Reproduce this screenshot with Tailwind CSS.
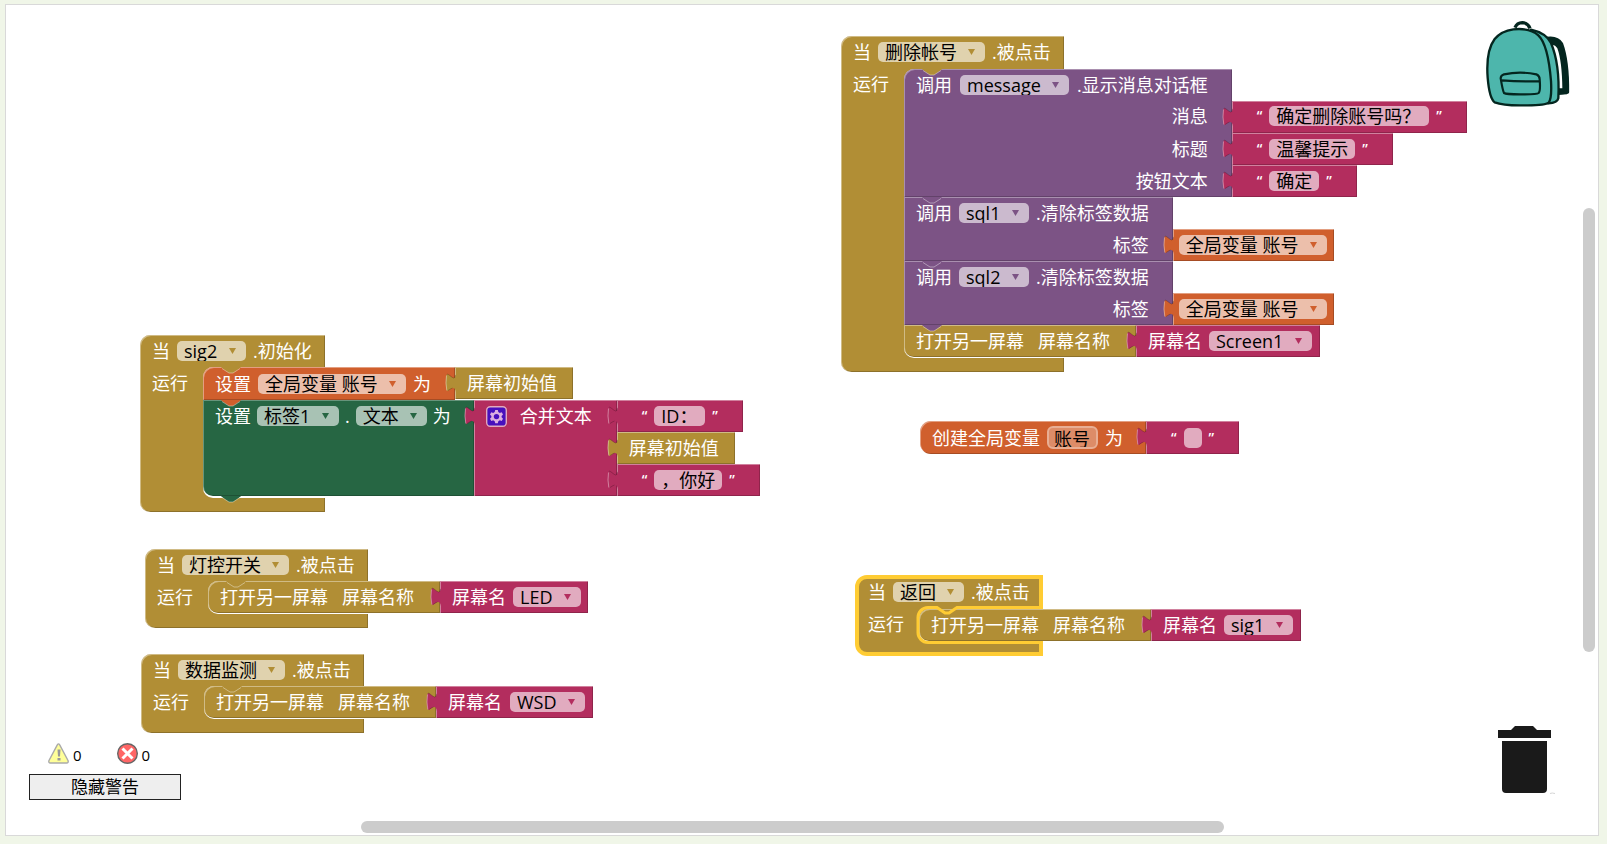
<!DOCTYPE html>
<html lang="zh-CN">
<head>
<meta charset="utf-8">
<title>Blocks</title>
<script src="https://cdn.jsdelivr.net/npm/@tailwindcss/browser@4"></script>
</head>
<body class="h-screen overflow-hidden bg-[#f0f6e8] pt-1 pr-2 pb-2 pl-[5px] font-['Open_Sans','Noto_Sans_CJK_SC',sans-serif] text-lg leading-5 text-white">

<svg class="hidden" aria-hidden="true">
  <symbol id="tab" viewBox="0 0 11 20">
    <path d="M11 1C10.500 5 9 5.500 7.500 4.500 5 3 3 .5 1.800 1.500 .5 3 .5 15 1.800 17.500 3 19 5 16 7.500 15 9 14.500 10.500 15.500 11 19Z" fill="currentColor"/>
    <path d="M10.500 2C10 5 9 5.500 7.500 4.500 5 3 3 .5 1.800 1.500" fill="none" stroke="#000" stroke-opacity=".2"/>
    <path d="M1.500 2.500Q.3 10 1.800 17.500" fill="none" stroke="#fff" stroke-opacity=".4"/>
    <path d="M3 17.500Q5 16 7.500 15" fill="none" stroke="#000" stroke-opacity=".2"/>
  </symbol>
  <symbol id="notch" viewBox="0 0 20 7">
    <path d="M0 0H20L19 1 12 6H8L1 1Z" fill="currentColor"/>
    <path d="M1 1.500L8 6H12L19 1.500" fill="none" stroke="#fff" stroke-opacity=".4"/>
  </symbol>
  <symbol id="arrow" viewBox="0 0 8 8"><path d="M0 1H8L4 8Z" fill="currentColor"/></symbol>
  <symbol id="gear" viewBox="0 0 21 21">
    <rect x=".7" y=".7" width="19.600" height="19.600" rx="3.500" fill="#4710bd" stroke="#e0a9bf" stroke-width="1.400"/>
    <path d="M9.200 4H11.800L12.300 6 13.800 6.900 15.700 6.300 17 8.500 15.600 9.900V11.300L17 12.700 15.700 14.900 13.800 14.300 12.300 15.200 11.800 17.200H9.200L8.700 15.200 7.200 14.300 5.300 14.900 4 12.700 5.400 11.300V9.900L4 8.500 5.300 6.300 7.200 6.900 8.700 6Z" fill="#dcb0e0"/>
    <circle cx="10.500" cy="10.600" r="2.700" fill="#4710bd"/>
  </symbol>
</svg>

<main class="relative h-full overflow-hidden border border-[#d9d9d9] bg-white">

  <!-- sig2 initialise -->
  <section class="absolute top-[330px] left-[134px] w-max">
    <div class="relative flex h-8 w-[185px] items-center gap-[7px] rounded-tl-[10px] bg-[#b18e35] pl-3 shadow-[inset_1px_1px_0_rgba(255,255,255,0.4),inset_-1px_0_0_rgba(0,0,0,0.2)]">
      <span>当</span>
      <label class="relative flex text-[#b18e35]"><select aria-label="组件" class="h-5 appearance-none rounded-[5px] bg-[#e0d2ae] pr-7 pl-[7px] leading-5 text-black"><option>sig2</option></select><svg class="pointer-events-none absolute top-1.5 right-2.5 size-[7px]"><use href="#arrow"/></svg></label>
      <span>.初始化</span>
      <svg class="absolute top-full left-[81px] z-10 h-[7px] w-5 text-[#b18e35]"><use href="#notch"/></svg>
    </div>
    <div class="flex">
      <div class="w-[74px] bg-[#b18e35] pt-1.5 pl-3 shadow-[inset_1px_0_0_rgba(255,255,255,0.4)]">运行</div>
      <div class="-ml-[11px] rounded-l-[10px] bg-white pb-0.5">
        <div class="flex">
          <div class="relative flex h-[33px] items-center gap-[7px] rounded-tl-[10px] bg-[#d05f2d] pr-6 pl-3 shadow-[inset_1px_1px_0_rgba(255,255,255,0.4),inset_-1px_-1px_0_rgba(0,0,0,0.2)]">
            <span>设置</span>
            <label class="relative flex text-[#d05f2d]"><select aria-label="变量" class="h-5 appearance-none rounded-[5px] bg-[#ecbfab] pr-7 pl-[7px] leading-5 text-black"><option>全局变量 账号</option></select><svg class="pointer-events-none absolute top-1.5 right-2.5 size-[7px]"><use href="#arrow"/></svg></label>
            <span>为</span>
            <svg class="absolute top-full left-[18px] z-10 h-[7px] w-5 text-[#d05f2d]"><use href="#notch"/></svg>
          </div>
          <div class="relative flex h-8 items-center bg-[#b18e35] pr-4 pl-3 shadow-[inset_1px_1px_0_rgba(255,255,255,0.4),inset_-1px_-1px_0_rgba(0,0,0,0.2)]">
            <svg class="absolute top-1.5 -left-2.5 h-5 w-[11px] text-[#b18e35]"><use href="#tab"/></svg>
            <span>屏幕初始值</span>
          </div>
        </div>
        <div class="flex">
          <div class="relative flex gap-1.5 rounded-bl-[10px] bg-[#266643] pt-1.5 pr-[23px] pl-3 shadow-[inset_1px_1px_0_rgba(255,255,255,0.3),inset_-1px_-1px_0_rgba(0,0,0,0.2)]">
            <span>设置</span>
            <label class="relative flex h-5 text-[#266643]"><select aria-label="组件" class="h-5 appearance-none rounded-[5px] bg-[#a8c2b4] pr-7 pl-[7px] leading-5 text-black"><option>标签1</option></select><svg class="pointer-events-none absolute top-1.5 right-2.5 size-[7px]"><use href="#arrow"/></svg></label>
            <span>.</span>
            <label class="relative flex h-5 text-[#266643]"><select aria-label="属性" class="h-5 appearance-none rounded-[5px] bg-[#a8c2b4] pr-7 pl-[7px] leading-5 text-black"><option>文本</option></select><svg class="pointer-events-none absolute top-1.5 right-2.5 size-[7px]"><use href="#arrow"/></svg></label>
            <span>为</span>
            <svg class="absolute top-full left-[18px] z-10 h-[7px] w-5 text-[#266643]"><use href="#notch"/></svg>
          </div>
          <div class="relative flex gap-[13px] bg-[#b32d5e] pt-1.5 pr-[25px] pl-3 shadow-[inset_1px_1px_0_rgba(255,255,255,0.4),inset_-1px_-1px_0_rgba(0,0,0,0.2)]">
            <svg class="absolute top-1.5 -left-2.5 h-5 w-[11px] text-[#b32d5e]"><use href="#tab"/></svg>
            <button type="button" aria-label="设置项目" class="flex size-[21px]"><svg class="size-[21px]"><use href="#gear"/></svg></button>
            <span>合并文本</span>
          </div>
          <div class="flex flex-col items-start">
            <div class="relative flex h-8 items-center gap-[7px] bg-[#b32d5e] px-[25px] shadow-[inset_1px_1px_0_rgba(255,255,255,0.4),inset_-1px_-1px_0_rgba(0,0,0,0.2)]">
              <svg class="absolute top-1.5 -left-2.5 h-5 w-[11px] text-[#b32d5e]"><use href="#tab"/></svg>
              <span class="h-5 text-sm font-semibold">“</span><input aria-label="文本" value="ID：" class="h-5 w-[51px] rounded-[5px] bg-[#e1abbf] px-[7px] leading-5 text-black"><span class="h-5 text-sm font-semibold">”</span>
            </div>
            <div class="relative flex h-8 items-center bg-[#b18e35] pr-4 pl-3 shadow-[inset_1px_1px_0_rgba(255,255,255,0.4),inset_-1px_-1px_0_rgba(0,0,0,0.2)]">
              <svg class="absolute top-1.5 -left-2.5 h-5 w-[11px] text-[#b18e35]"><use href="#tab"/></svg>
              <span>屏幕初始值</span>
            </div>
            <div class="relative flex h-8 items-center gap-[7px] bg-[#b32d5e] px-[25px] shadow-[inset_1px_1px_0_rgba(255,255,255,0.4),inset_-1px_-1px_0_rgba(0,0,0,0.2)]">
              <svg class="absolute top-1.5 -left-2.5 h-5 w-[11px] text-[#b32d5e]"><use href="#tab"/></svg>
              <span class="h-5 text-sm font-semibold">“</span><input aria-label="文本" value="，你好" class="h-5 w-[68px] rounded-[5px] bg-[#e1abbf] px-[7px] leading-5 text-black"><span class="h-5 text-sm font-semibold">”</span>
            </div>
          </div>
        </div>
      </div>
    </div>
    <div class="h-[14px] w-[185px] rounded-bl-[10px] bg-[#b18e35] shadow-[inset_1px_0_0_rgba(255,255,255,0.4),inset_-1px_-1px_0_rgba(0,0,0,0.2)]"></div>
  </section>

  <!-- light switch clicked -->
  <section class="absolute top-[544px] left-[139px] w-max">
    <div class="relative flex h-8 w-[223px] items-center gap-[7px] rounded-tl-[10px] bg-[#b18e35] pl-3 shadow-[inset_1px_1px_0_rgba(255,255,255,0.4),inset_-1px_0_0_rgba(0,0,0,0.2)]">
      <span>当</span>
      <label class="relative flex text-[#b18e35]"><select aria-label="组件" class="h-5 appearance-none rounded-[5px] bg-[#e0d2ae] pr-7 pl-[7px] leading-5 text-black"><option>灯控开关</option></select><svg class="pointer-events-none absolute top-1.5 right-2.5 size-[7px]"><use href="#arrow"/></svg></label>
      <span>.被点击</span>
      <svg class="absolute top-full left-[81px] z-10 h-[7px] w-5 text-[#b18e35]"><use href="#notch"/></svg>
    </div>
    <div class="flex">
      <div class="w-[74px] bg-[#b18e35] pt-1.5 pl-3 shadow-[inset_1px_0_0_rgba(255,255,255,0.4)]">运行</div>
      <div class="-ml-[11px] flex rounded-l-[10px] bg-white pb-px">
        <div class="flex h-8 items-center gap-3.5 rounded-l-[10px] bg-[#b18e35] pr-[26px] pl-3 shadow-[inset_1px_1px_0_rgba(255,255,255,0.4),inset_-1px_-1px_0_rgba(0,0,0,0.2)]"><span>打开另一屏幕</span><span>屏幕名称</span></div>
        <div class="relative flex h-8 items-center gap-[7px] bg-[#b32d5e] pr-[7px] pl-3 shadow-[inset_1px_1px_0_rgba(255,255,255,0.4),inset_-1px_-1px_0_rgba(0,0,0,0.2)]">
          <svg class="absolute top-1.5 -left-2.5 h-5 w-[11px] text-[#b32d5e]"><use href="#tab"/></svg>
          <span>屏幕名</span>
          <label class="relative flex text-[#b32d5e]"><select aria-label="屏幕名" class="h-5 appearance-none rounded-[5px] bg-[#e1abbf] pr-7 pl-[7px] leading-5 text-black"><option>LED</option></select><svg class="pointer-events-none absolute top-1.5 right-2.5 size-[7px]"><use href="#arrow"/></svg></label>
        </div>
      </div>
    </div>
    <div class="h-[14px] w-[223px] rounded-bl-[10px] bg-[#b18e35] shadow-[inset_1px_0_0_rgba(255,255,255,0.4),inset_-1px_-1px_0_rgba(0,0,0,0.2)]"></div>
  </section>

  <!-- data monitor clicked -->
  <section class="absolute top-[649px] left-[135px] w-max">
    <div class="relative flex h-8 w-[223px] items-center gap-[7px] rounded-tl-[10px] bg-[#b18e35] pl-3 shadow-[inset_1px_1px_0_rgba(255,255,255,0.4),inset_-1px_0_0_rgba(0,0,0,0.2)]">
      <span>当</span>
      <label class="relative flex text-[#b18e35]"><select aria-label="组件" class="h-5 appearance-none rounded-[5px] bg-[#e0d2ae] pr-7 pl-[7px] leading-5 text-black"><option>数据监测</option></select><svg class="pointer-events-none absolute top-1.5 right-2.5 size-[7px]"><use href="#arrow"/></svg></label>
      <span>.被点击</span>
      <svg class="absolute top-full left-[81px] z-10 h-[7px] w-5 text-[#b18e35]"><use href="#notch"/></svg>
    </div>
    <div class="flex">
      <div class="w-[74px] bg-[#b18e35] pt-1.5 pl-3 shadow-[inset_1px_0_0_rgba(255,255,255,0.4)]">运行</div>
      <div class="-ml-[11px] flex rounded-l-[10px] bg-white pb-px">
        <div class="flex h-8 items-center gap-3.5 rounded-l-[10px] bg-[#b18e35] pr-[26px] pl-3 shadow-[inset_1px_1px_0_rgba(255,255,255,0.4),inset_-1px_-1px_0_rgba(0,0,0,0.2)]"><span>打开另一屏幕</span><span>屏幕名称</span></div>
        <div class="relative flex h-8 items-center gap-2 bg-[#b32d5e] pr-2 pl-3 shadow-[inset_1px_1px_0_rgba(255,255,255,0.4),inset_-1px_-1px_0_rgba(0,0,0,0.2)]">
          <svg class="absolute top-1.5 -left-2.5 h-5 w-[11px] text-[#b32d5e]"><use href="#tab"/></svg>
          <span>屏幕名</span>
          <label class="relative flex text-[#b32d5e]"><select aria-label="屏幕名" class="h-5 appearance-none rounded-[5px] bg-[#e1abbf] pr-7 pl-[7px] leading-5 text-black"><option>WSD</option></select><svg class="pointer-events-none absolute top-1.5 right-2.5 size-[7px]"><use href="#arrow"/></svg></label>
        </div>
      </div>
    </div>
    <div class="h-[14px] w-[223px] rounded-bl-[10px] bg-[#b18e35] shadow-[inset_1px_0_0_rgba(255,255,255,0.4),inset_-1px_-1px_0_rgba(0,0,0,0.2)]"></div>
  </section>

  <!-- delete account clicked -->
  <section class="absolute top-[31px] left-[835px] w-max">
    <div class="relative flex h-[33px] w-[223px] items-center gap-[7px] rounded-tl-[10px] bg-[#b18e35] pb-0.5 pl-3 shadow-[inset_1px_1px_0_rgba(255,255,255,0.4),inset_-1px_0_0_rgba(0,0,0,0.2)]">
      <span>当</span>
      <label class="relative flex text-[#b18e35]"><select aria-label="组件" class="h-5 appearance-none rounded-[5px] bg-[#e0d2ae] pr-7 pl-[7px] leading-5 text-black"><option>删除帐号</option></select><svg class="pointer-events-none absolute top-1.5 right-2.5 size-[7px]"><use href="#arrow"/></svg></label>
      <span>.被点击</span>
      <svg class="absolute top-full left-[81px] z-10 h-[7px] w-5 text-[#b18e35]"><use href="#notch"/></svg>
    </div>
    <div class="flex">
      <div class="w-[74px] bg-[#b18e35] pt-[5px] pl-3 shadow-[inset_1px_0_0_rgba(255,255,255,0.4)]">运行</div>
      <div class="-ml-[11px] rounded-l-[10px] bg-white pb-px">
        <div class="flex">
          <div class="relative rounded-tl-[10px] bg-[#7c5385] pr-6 pl-3 shadow-[inset_1px_1px_0_rgba(255,255,255,0.35),inset_-1px_-1px_0_rgba(0,0,0,0.2)]">
            <div class="flex h-8 items-center gap-2">
              <span>调用</span>
              <label class="relative flex text-[#7c5385]"><select aria-label="组件" class="h-5 appearance-none rounded-[5px] bg-[#cbbace] pr-7 pl-[7px] leading-5 text-black"><option>message</option></select><svg class="pointer-events-none absolute top-1.5 right-2.5 size-[7px]"><use href="#arrow"/></svg></label>
              <span>.显示消息对话框</span>
            </div>
            <div class="flex h-8 items-center justify-end pb-0.5">消息</div>
            <div class="flex h-8 items-center justify-end">标题</div>
            <div class="flex h-8 items-center justify-end">按钮文本</div>
            <svg class="absolute top-full left-[18px] z-10 h-[7px] w-5 text-[#7c5385]"><use href="#notch"/></svg>
          </div>
          <div class="flex flex-col items-start pt-8">
            <div class="relative flex h-8 items-center gap-[7px] bg-[#b32d5e] px-[25px] pb-0.5 shadow-[inset_1px_1px_0_rgba(255,255,255,0.4),inset_-1px_-1px_0_rgba(0,0,0,0.2)]">
              <svg class="absolute top-1.5 -left-2.5 h-5 w-[11px] text-[#b32d5e]"><use href="#tab"/></svg>
              <span class="h-5 text-sm font-semibold">“</span><input aria-label="消息" value="确定删除账号吗？" class="h-5 w-[160px] rounded-[5px] bg-[#e1abbf] px-[7px] leading-5 text-black"><span class="h-5 text-sm font-semibold">”</span>
            </div>
            <div class="relative flex h-8 items-center gap-[7px] bg-[#b32d5e] px-[25px] shadow-[inset_1px_1px_0_rgba(255,255,255,0.4),inset_-1px_-1px_0_rgba(0,0,0,0.2)]">
              <svg class="absolute top-1.5 -left-2.5 h-5 w-[11px] text-[#b32d5e]"><use href="#tab"/></svg>
              <span class="h-5 text-sm font-semibold">“</span><input aria-label="标题" value="温馨提示" class="h-5 w-[86px] rounded-[5px] bg-[#e1abbf] px-[7px] leading-5 text-black"><span class="h-5 text-sm font-semibold">”</span>
            </div>
            <div class="relative flex h-8 items-center gap-[7px] bg-[#b32d5e] px-[25px] shadow-[inset_1px_1px_0_rgba(255,255,255,0.4),inset_-1px_-1px_0_rgba(0,0,0,0.2)]">
              <svg class="absolute top-1.5 -left-2.5 h-5 w-[11px] text-[#b32d5e]"><use href="#tab"/></svg>
              <span class="h-5 text-sm font-semibold">“</span><input aria-label="按钮文本" value="确定" class="h-5 w-[50px] rounded-[5px] bg-[#e1abbf] px-[7px] leading-5 text-black"><span class="h-5 text-sm font-semibold">”</span>
            </div>
          </div>
        </div>
        <div class="flex">
          <div class="relative bg-[#7c5385] pr-6 pl-3 shadow-[inset_1px_1px_0_rgba(255,255,255,0.35),inset_-1px_-1px_0_rgba(0,0,0,0.2)]">
            <div class="flex h-8 items-center gap-[7px]">
              <span>调用</span>
              <label class="relative flex text-[#7c5385]"><select aria-label="组件" class="h-5 appearance-none rounded-[5px] bg-[#cbbace] pr-7 pl-[7px] leading-5 text-black"><option>sql1</option></select><svg class="pointer-events-none absolute top-1.5 right-2.5 size-[7px]"><use href="#arrow"/></svg></label>
              <span>.清除标签数据</span>
            </div>
            <div class="flex h-8 items-center justify-end">标签</div>
            <svg class="absolute top-full left-[18px] z-10 h-[7px] w-5 text-[#7c5385]"><use href="#notch"/></svg>
          </div>
          <div class="pt-8">
            <div class="relative flex h-8 items-center bg-[#d05f2d] pr-[7px] pl-1.5 shadow-[inset_1px_1px_0_rgba(255,255,255,0.4),inset_-1px_-1px_0_rgba(0,0,0,0.2)]">
              <svg class="absolute top-1.5 -left-2.5 h-5 w-[11px] text-[#d05f2d]"><use href="#tab"/></svg>
              <label class="relative flex text-[#d05f2d]"><select aria-label="变量" class="h-5 appearance-none rounded-[5px] bg-[#ecbfab] pr-7 pl-[7px] leading-5 text-black"><option>全局变量 账号</option></select><svg class="pointer-events-none absolute top-1.5 right-2.5 size-[7px]"><use href="#arrow"/></svg></label>
            </div>
          </div>
        </div>
        <div class="flex">
          <div class="relative bg-[#7c5385] pr-6 pl-3 shadow-[inset_1px_1px_0_rgba(255,255,255,0.35),inset_-1px_-1px_0_rgba(0,0,0,0.2)]">
            <div class="flex h-8 items-center gap-[7px]">
              <span>调用</span>
              <label class="relative flex text-[#7c5385]"><select aria-label="组件" class="h-5 appearance-none rounded-[5px] bg-[#cbbace] pr-7 pl-[7px] leading-5 text-black"><option>sql2</option></select><svg class="pointer-events-none absolute top-1.5 right-2.5 size-[7px]"><use href="#arrow"/></svg></label>
              <span>.清除标签数据</span>
            </div>
            <div class="flex h-8 items-center justify-end">标签</div>
            <svg class="absolute top-full left-[18px] z-10 h-[7px] w-5 text-[#7c5385]"><use href="#notch"/></svg>
          </div>
          <div class="pt-8">
            <div class="relative flex h-8 items-center bg-[#d05f2d] pr-[7px] pl-1.5 shadow-[inset_1px_1px_0_rgba(255,255,255,0.4),inset_-1px_-1px_0_rgba(0,0,0,0.2)]">
              <svg class="absolute top-1.5 -left-2.5 h-5 w-[11px] text-[#d05f2d]"><use href="#tab"/></svg>
              <label class="relative flex text-[#d05f2d]"><select aria-label="变量" class="h-5 appearance-none rounded-[5px] bg-[#ecbfab] pr-7 pl-[7px] leading-5 text-black"><option>全局变量 账号</option></select><svg class="pointer-events-none absolute top-1.5 right-2.5 size-[7px]"><use href="#arrow"/></svg></label>
            </div>
          </div>
        </div>
        <div class="flex">
          <div class="flex h-8 items-center gap-3.5 rounded-bl-[10px] bg-[#b18e35] pr-[26px] pl-3 shadow-[inset_1px_1px_0_rgba(255,255,255,0.4),inset_-1px_-1px_0_rgba(0,0,0,0.2)]"><span>打开另一屏幕</span><span>屏幕名称</span></div>
          <div class="relative flex h-8 items-center gap-[7px] bg-[#b32d5e] pr-2 pl-3 shadow-[inset_1px_1px_0_rgba(255,255,255,0.4),inset_-1px_-1px_0_rgba(0,0,0,0.2)]">
            <svg class="absolute top-1.5 -left-2.5 h-5 w-[11px] text-[#b32d5e]"><use href="#tab"/></svg>
            <span>屏幕名</span>
            <label class="relative flex text-[#b32d5e]"><select aria-label="屏幕名" class="h-5 appearance-none rounded-[5px] bg-[#e1abbf] pr-7 pl-[7px] leading-5 text-black"><option>Screen1</option></select><svg class="pointer-events-none absolute top-1.5 right-2.5 size-[7px]"><use href="#arrow"/></svg></label>
          </div>
        </div>
      </div>
    </div>
    <div class="h-[14px] w-[223px] rounded-bl-[10px] bg-[#b18e35] shadow-[inset_1px_0_0_rgba(255,255,255,0.4),inset_-1px_-1px_0_rgba(0,0,0,0.2)]"></div>
  </section>

  <!-- global variable -->
  <section class="absolute top-[416px] left-[914px] flex w-max">
    <div class="flex h-[33px] items-center gap-[7px] rounded-l-[11px] bg-[#d05f2d] pr-[23px] pl-3 shadow-[inset_1px_1px_0_rgba(255,255,255,0.4),inset_-1px_-1px_0_rgba(0,0,0,0.2)]">
      <span>创建全局变量</span>
      <input aria-label="变量名" value="账号" class="h-[23px] w-[51px] rounded-[6px] border-2 border-[#e8ae94] bg-[#dd8c68] px-[5px] leading-5 text-black">
      <span>为</span>
    </div>
    <div class="relative flex h-[33px] items-center gap-[7px] bg-[#b32d5e] px-[25px] shadow-[inset_1px_1px_0_rgba(255,255,255,0.4),inset_-1px_-1px_0_rgba(0,0,0,0.2)]">
      <svg class="absolute top-1.5 -left-2.5 h-5 w-[11px] text-[#b32d5e]"><use href="#tab"/></svg>
      <span class="h-5 text-sm font-semibold">“</span><input aria-label="文本" value="" class="h-5 w-[18px] rounded-[5px] bg-[#e1abbf] text-black"><span class="h-5 text-sm font-semibold">”</span>
    </div>
  </section>

  <!-- back clicked, selected -->
  <section class="absolute top-[572px] left-[850px] w-max">
    <div class="flex h-8 w-[185px] items-center gap-[7px] rounded-tl-[10px] bg-[#b18e35] pb-0.5 pl-3">
      <span>当</span>
      <label class="relative flex text-[#b18e35]"><select aria-label="组件" class="h-5 appearance-none rounded-[5px] bg-[#e0d2ae] pr-7 pl-[7px] leading-5 text-black"><option>返回</option></select><svg class="pointer-events-none absolute top-1.5 right-2.5 size-[7px]"><use href="#arrow"/></svg></label>
      <span>.被点击</span>
    </div>
    <div class="flex">
      <div class="w-[74px] bg-[#b18e35] pt-[5px] pl-3">运行</div>
      <div class="-ml-[11px] flex rounded-l-[10px] bg-white pb-px">
        <div class="flex h-8 items-center gap-3.5 rounded-l-[10px] bg-[#b18e35] pr-[26px] pl-3 shadow-[inset_1px_1px_0_rgba(255,255,255,0.4),inset_-1px_-1px_0_rgba(0,0,0,0.2)]"><span>打开另一屏幕</span><span>屏幕名称</span></div>
        <div class="relative flex h-8 items-center gap-[7px] bg-[#b32d5e] pr-2 pl-3 shadow-[inset_1px_1px_0_rgba(255,255,255,0.4),inset_-1px_-1px_0_rgba(0,0,0,0.2)]">
          <svg class="absolute top-1.5 -left-2.5 h-5 w-[11px] text-[#b32d5e]"><use href="#tab"/></svg>
          <span>屏幕名</span>
          <label class="relative flex text-[#b32d5e]"><select aria-label="屏幕名" class="h-5 appearance-none rounded-[5px] bg-[#e1abbf] pr-7 pl-[7px] leading-5 text-black"><option>sig1</option></select><svg class="pointer-events-none absolute top-1.5 right-2.5 size-[7px]"><use href="#arrow"/></svg></label>
        </div>
      </div>
    </div>
    <div class="h-[13px] w-[185px] rounded-bl-[10px] bg-[#b18e35]"></div>
    <svg class="pointer-events-none absolute top-0 left-0 h-[78px] w-[185px] overflow-visible" viewBox="0 0 185 78" fill="none" stroke="#fc3">
      <path d="M185 31V0H11A10 10 0 0 0 1 10V67A10 10 0 0 0 11 77H185V66" stroke-width="4"/>
      <path d="M187 30.500H101L93 36H89L81 30.500H72A10 10 0 0 0 62 41V55A10 10 0 0 0 72 65.500H187" stroke-width="3"/>
    </svg>
  </section>

  <!-- backpack -->
  <button type="button" aria-label="背包" class="absolute top-1.5 right-[-9px] h-[110px] w-[137px]">
    <svg viewBox="0 0 411 330" class="h-[110px] w-[137px]">
      <path d="M228 82Q262 78 273 98 296 160 297 240L291 250 262 252 265 232 277 232Q276 150 262 112 255 100 244 102Z" fill="#04261f"/>
      <path d="M228 82Q262 76 275 98 294 150 293 244L266 246" fill="none" stroke="#04261f" stroke-width="9" stroke-linejoin="round"/>
      <path d="M135 50Q141 35 157 35 174 36 180 52" fill="none" stroke="#04261f" stroke-width="10"/>
      <path d="M183 56Q228 66 243 96 270 160 265 262 262 276 235 277L190 200Z" fill="#4db6ac" stroke="#04261f" stroke-width="7" stroke-linejoin="round"/>
      <path d="M130 55Q180 50 205 73 234 100 243 210 246 262 236 275 226 284 160 283 100 284 74 274 58 262 53 200 47 120 74 84 94 60 130 55Z" fill="#4db6ac" stroke="#04261f" stroke-width="7" stroke-linejoin="round"/>
      <path d="M92 202Q92 194 102 190 150 180 199 190 209 195 209 205 212 240 206 246 200 251 150 250 108 250 102 246 98 238 92 202ZM96 208Q150 212 209 211" fill="none" stroke="#04261f" stroke-width="6.500" stroke-linejoin="round"/>
    </svg>
  </button>

  <!-- trash -->
  <button type="button" aria-label="垃圾桶" class="absolute right-[43px] bottom-10 h-[70px] w-[57px]">
    <svg viewBox="0 0 57 70" class="h-[70px] w-[57px]" fill="#1a1a1a">
      <path d="M0 5H13L17 1H35L39 5H53V13H0ZM4 16H49V64Q49 68 45 68H8Q4 68 4 64Z"/>
      <path d="M52 68.500Q54 67.500 57 68.500" fill="none" stroke="#d5d5d5"/>
    </svg>
  </button>

  <!-- warnings -->
  <aside class="absolute bottom-[35px] left-[23px] flex w-[152px] flex-col gap-2.5 text-black">
    <div class="flex gap-[35px] pl-[19px] text-[15px]">
      <span class="flex items-end gap-1">
        <svg viewBox="0 0 21 21" class="size-[21px]"><path d="M9.300 1.800Q10.500 0 11.700 1.800L20 17.500Q20.800 19.800 18.500 20H2.500Q.2 19.800 1 17.500Z" fill="#ff9" stroke="#aaa" stroke-width="1.400"/><path d="M9.500 6.500H12.500L12 13.500H10ZM9.500 15H12.500V17.500H9.500Z" fill="#999"/></svg>
        <span class="leading-[17px]">0</span>
      </span>
      <span class="flex items-end gap-1">
        <svg viewBox="0 0 21 21" class="size-[21px]"><circle cx="10.500" cy="10.500" r="9.800" fill="#f66" stroke="#666" stroke-width="1.400"/><path d="M5.500 5.500L15.500 15.500M15.500 5.500L5.500 15.500" stroke="#fff" stroke-width="3"/></svg>
        <span class="leading-[17px]">0</span>
      </span>
    </div>
    <button type="button" class="h-[26px] border border-[#222] bg-[#eee] text-[17px] leading-5">隐藏警告</button>
  </aside>

  <!-- scrollbars -->
  <div class="absolute bottom-0.5 left-[22.300%] h-3 w-[54.200%] rounded-full bg-[#ccc]"></div>
  <div class="absolute top-[24.400%] right-[3px] h-[53.500%] w-3 rounded-full bg-[#ccc]"></div>
</main>
</body>
</html>
